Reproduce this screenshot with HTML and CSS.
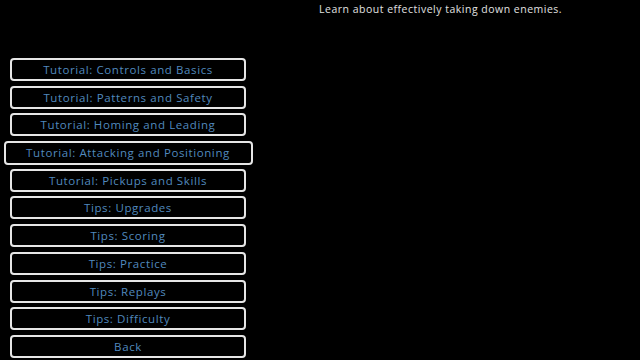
FILE: index.html
```html
<!DOCTYPE html>
<html>
<head>
    <meta charset="utf-8">
    <title>Help</title>
    <link rel="stylesheet" href="styles.css">
</head>
<body>
<div class="screen">
    <div class="menu">
        <div class="item">Tutorial: Controls and Basics</div>
        <div class="item">Tutorial: Patterns and Safety</div>
        <div class="item">Tutorial: Homing and Leading</div>
        <div class="item selected">Tutorial: Attacking and Positioning</div>
        <div class="item">Tutorial: Pickups and Skills</div>
        <div class="item">Tips: Upgrades</div>
        <div class="item">Tips: Scoring</div>
        <div class="item">Tips: Practice</div>
        <div class="item">Tips: Replays</div>
        <div class="item">Tips: Difficulty</div>
        <div class="item">Back</div>
    </div>
    <div class="desc">Learn about effectively taking down enemies.</div>
</div>
</body>
</html>
```

FILE: styles.css
```css
* {margin:0; padding:0; box-sizing:border-box}
body {background:#000; width:640px; height:360px; overflow:hidden; font-family:"Open Sans", sans-serif}
.screen {display:flex; height:360px}
.menu {width:256px; padding-top:58px; display:flex; flex-direction:column; align-items:center; gap:4.7px}
.item {width:236px; height:23px; border:2px solid #e6e6e6; border-radius:4px; color:#5189be; font-size:11.5px; font-weight:500; letter-spacing:0.6px; text-align:center; line-height:19px}
.item.selected {width:249px; height:24px; margin-top:-0.5px; margin-bottom:-0.5px; line-height:20px}
.desc {padding:2px 0 0 63px; color:#e0e0e0; font-size:10.5px; font-weight:500; letter-spacing:0.5px; line-height:14px}
```
